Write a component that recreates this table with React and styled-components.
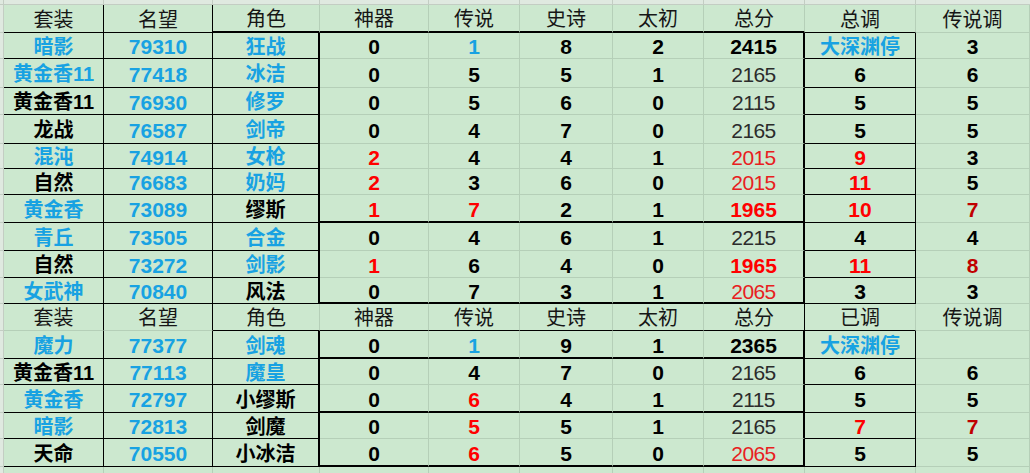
import React from 'react';
import styled, { createGlobalStyle } from 'styled-components';

const GlobalStyle = createGlobalStyle`
  html, body {
    margin: 0;
    padding: 0;
    background: #cce8cf;
  }
  body {
    width: 1030px;
    height: 473px;
    overflow: hidden;
    font-family: "Liberation Sans", "Noto Sans CJK SC", sans-serif;
  }
`;

const COLS = [4, 100, 109, 107, 109, 91, 93, 91, 101, 111, 114];
const ROWS = [5, 28, 26, 29, 27, 29, 25, 26, 28, 28, 27, 26, 27, 28, 26, 28, 26, 28, 6];

const LINES = {
  g: '1px solid #b5cfb8',
  s: '1px solid #c3cdc3',
  k: '1px solid #000',
  K: '2px solid #000',
  n: '0 solid transparent',
};

const TONES = {
  h: { color: '#161616', weight: 400 },
  b: { color: '#18a2e2', weight: 700 },
  k: { color: '#000', weight: 700 },
  r: { color: '#ff0000', weight: 700 },
  d: { color: '#c00000', weight: 700 },
  t: { color: '#2b2b2b', weight: 400, thin: true },
  x: { color: '#e8201e', weight: 400, thin: true },
};

const Sheet = styled.div`
  display: grid;
  grid-template-columns: ${COLS.map((c) => `${c}px`).join(' ')};
  grid-template-rows: ${ROWS.map((r) => `${r}px`).join(' ')};
  width: 1030px;
  height: 473px;
  overflow: hidden;
  background: #cce8cf;
`;

const Strip = styled.div`
  box-sizing: border-box;
  background: #dfe9e0;
  border-right: ${(p) => LINES[p.$r || 's']};
  border-bottom: ${(p) => LINES[p.$b || 's']};
`;

const Cell = styled.div`
  box-sizing: border-box;
  display: flex;
  align-items: center;
  justify-content: center;
  padding-top: 2px;
  white-space: nowrap;
  overflow: hidden;
  line-height: 1;
  border-right: ${(p) => LINES[p.$r]};
  border-bottom: ${(p) => LINES[p.$b]};
  color: ${(p) => TONES[p.$tone].color};
  font-weight: ${(p) => TONES[p.$tone].weight};
  font-size: ${(p) => (p.$num ? '21px' : '20px')};
  letter-spacing: ${(p) => (TONES[p.$tone].thin ? '-0.6px' : '0')};
`;

const H1 = '套装 名望 角色 神器 传说 史诗 太初 总分 总调 传说调'.split(' ');
const H2 = '套装 名望 角色 神器 传说 史诗 太初 总分 已调 传说调'.split(' ');

const parse = (s) => s.split(' ').map((c) => {
  const [text, tone] = c.split(':');
  return [text === '_' ? '' : text, tone];
});

const DATA = [
  { head: H1, r: 'kkgggggggg', b: 'kkKKKKKKkg' },
  { cells: '暗影:b 79310:b 狂战:b 0:k 1:b 8:k 2:k 2415:k 大深渊停:b 3:k', r: 'kkKggggKkg', b: 'kkkgggggkg' },
  { cells: '黄金香11:b 77418:b 冰洁:b 0:k 5:k 5:k 1:k 2165:t 6:k 6:k', r: 'kkKggggKkg', b: 'kkkgggggkg' },
  { cells: '黄金香11:k 76930:b 修罗:b 0:k 5:k 6:k 0:k 2115:t 5:k 5:k', r: 'kkKggggKkg', b: 'kkkgggggkg' },
  { cells: '龙战:k 76587:b 剑帝:b 0:k 4:k 7:k 0:k 2165:t 5:k 5:k', r: 'kkKggggKkg', b: 'kkkgggggkg' },
  { cells: '混沌:b 74914:b 女枪:b 2:r 4:k 4:k 1:k 2015:x 9:r 3:k', r: 'kkKggggKkg', b: 'kkkgggggkg' },
  { cells: '自然:k 76683:b 奶妈:b 2:r 3:k 6:k 0:k 2015:x 11:r 5:k', r: 'kkKggggKkg', b: 'kkkgggggkg' },
  { cells: '黄金香:b 73089:b 缪斯:k 1:r 7:r 2:k 1:k 1965:r 10:r 7:d', r: 'kkKggggKkg', b: 'kkkKKKKKkg' },
  { cells: '青丘:b 73505:b 合金:b 0:k 4:k 6:k 1:k 2215:t 4:k 4:k', r: 'kkKggggKkg', b: 'kkkgggggkg' },
  { cells: '自然:k 73272:b 剑影:b 1:r 6:k 4:k 0:k 1965:r 11:r 8:d', r: 'kkKggggKkg', b: 'kkkgggggkg' },
  { cells: '女武神:b 70840:b 风法:k 0:k 7:k 3:k 1:k 2065:x 3:k 3:k', r: 'kkKggggKkg', b: 'kkkKKKKKkg' },
  { head: H2, r: 'kkgggggkgg', b: 'ggkkkkkkkg' },
  { cells: '魔力:b 77377:b 剑魂:b 0:k 1:b 9:k 1:k 2365:k 大深渊停:b _:k', r: 'kkKggggKkg', b: 'kkkKKKKKkg' },
  { cells: '黄金香11:k 77113:b 魔皇:b 0:k 4:k 7:k 0:k 2165:t 6:k 6:k', r: 'kkKggggKkg', b: 'kkkgggggkg' },
  { cells: '黄金香:b 72797:b 小缪斯:k 0:k 6:r 4:k 1:k 2115:t 5:k 5:k', r: 'kkKggggKkg', b: 'kkkKKKKKkg' },
  { cells: '暗影:b 72813:b 剑魔:k 0:k 5:r 5:k 1:k 2165:t 7:r 7:d', r: 'kkKggggKkg', b: 'kkkgggggkg' },
  { cells: '天命:k 70550:b 小冰洁:k 0:k 6:r 5:k 0:k 2065:x 5:k 5:k', r: 'kkKggggKkg', b: 'kkkKKKKKkg' },
];

export default function App() {
  return (
    <>
      <GlobalStyle />
      <Sheet>
        <Strip />
        {H1.map((_, i) => (
          <Strip key={`top-${i}`} $r={i === 9 ? 'n' : 's'} />
        ))}
        {DATA.map((row, ri) => {
          const cells = row.head ? row.head.map((t) => [t, 'h']) : parse(row.cells);
          return (
            <React.Fragment key={ri}>
              <Strip />
              {cells.map(([text, tone], ci) => (
                <Cell
                  key={ci}
                  $r={row.r[ci]}
                  $b={row.b[ci]}
                  $tone={tone}
                  $num={/^\d+$/.test(text)}
                >
                  {text}
                </Cell>
              ))}
            </React.Fragment>
          );
        })}
        <Strip $b="n" />
        {H1.map((_, i) => (
          <Cell key={`tail-${i}`} $r="g" $b="n" $tone="h" />
        ))}
      </Sheet>
    </>
  );
}
